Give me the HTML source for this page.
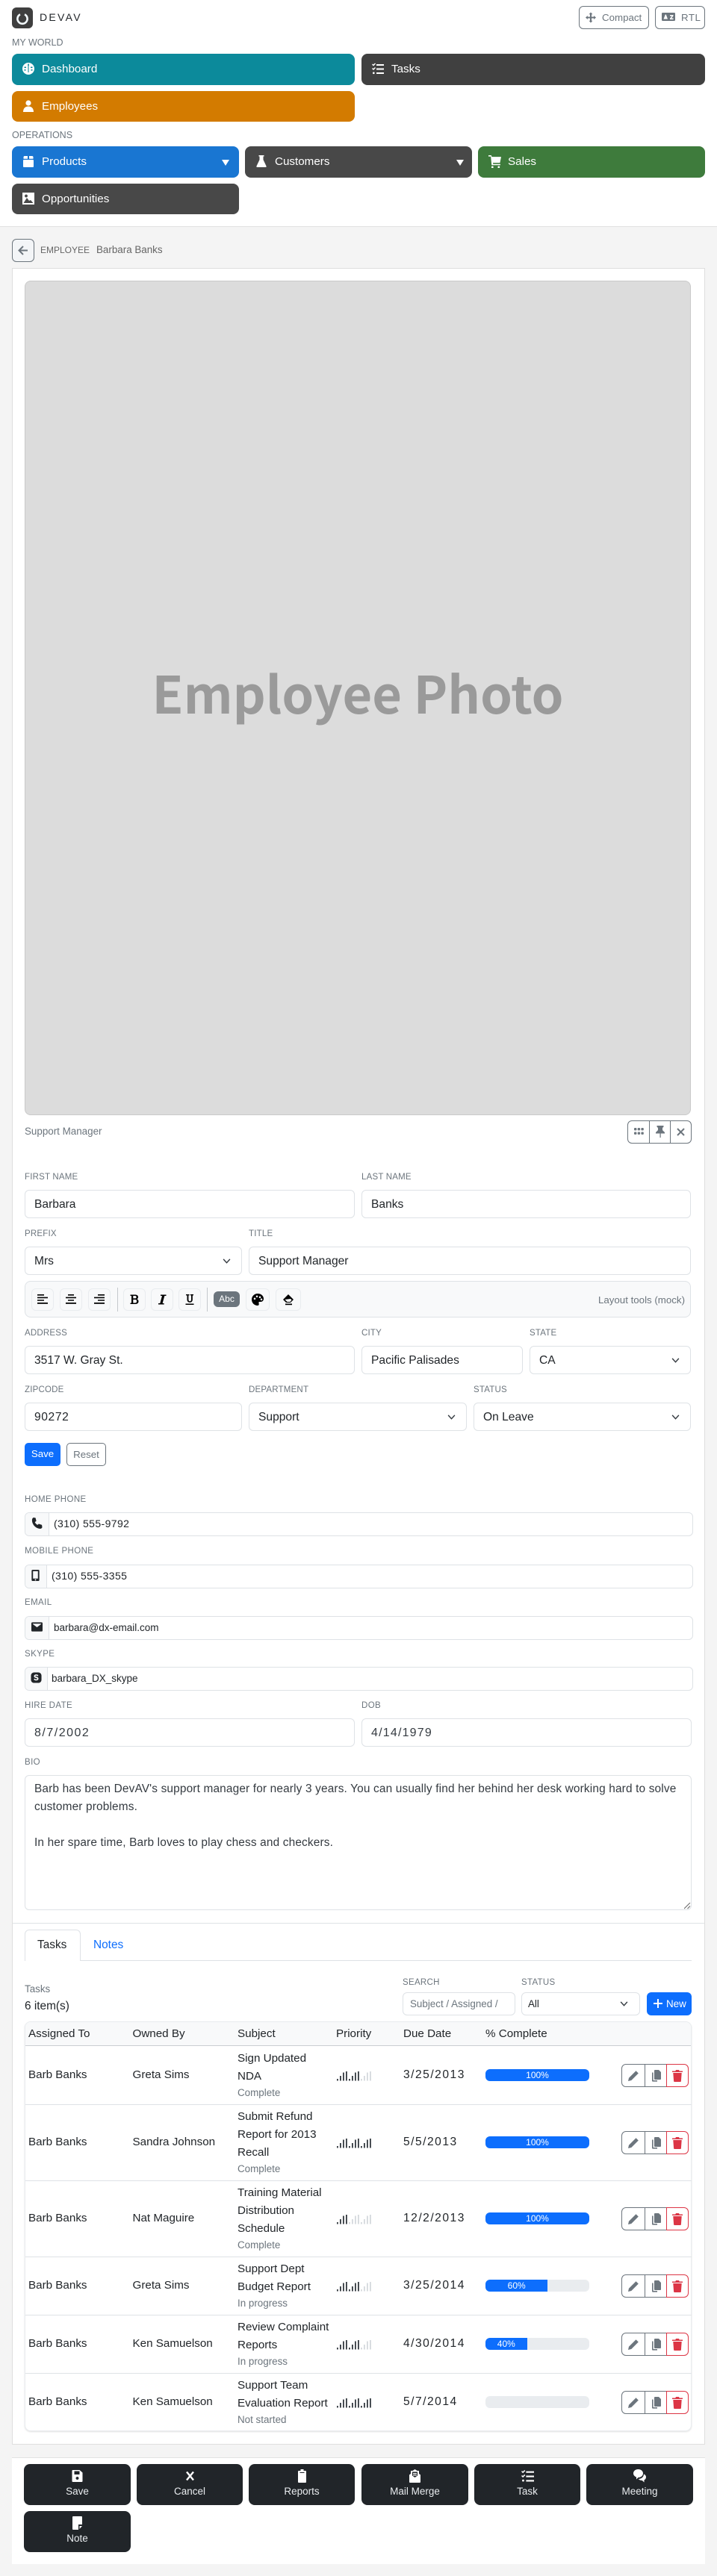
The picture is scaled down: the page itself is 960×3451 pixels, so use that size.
<!DOCTYPE html>
<html><head><meta charset="utf-8"><title>DevAV Employee</title>
<style>
html,body{margin:0;padding:0;background:#fff}
body{position:relative;width:960px;height:3451px;overflow:hidden;font-family:"Liberation Sans",sans-serif;color:#212529;font-size:15.2px}
.a,.t,.b,.l,.i{position:absolute;box-sizing:border-box}
.t{white-space:nowrap;line-height:22px;height:22px}
.l{white-space:nowrap;line-height:14px;height:14px;font-size:11.5px;color:#6c757d;letter-spacing:.2px}
.i{background:#fff;border:1px solid #dee2e6;border-radius:6px;height:38px;line-height:37px;padding-left:12px;font-size:15.6px;white-space:nowrap}
.nav{position:absolute;box-sizing:border-box;border-radius:8px;color:#fff;font-size:15.2px;line-height:42px;padding-left:40px;height:42px}
.nav svg{position:absolute;left:14px;top:12px;width:16px;height:16px;fill:#fff}
.chev{position:absolute;width:11px;height:7px;right:14px;top:15px;fill:none;stroke:#343a40;stroke-width:1.6}
.tb{position:absolute;top:9px;height:30px;width:30px;box-sizing:border-box;background:#f8f9fa;border:1px solid #e9ecef;border-radius:6px}
.tb svg{position:absolute;left:6px;top:6px;width:16px;height:16px;fill:#000}
.g{position:absolute;background:#fff;border:1px solid #dee2e6;border-radius:6px;height:30px;width:893px;left:33px;line-height:29px;font-size:13.5px;white-space:nowrap}
.g b{position:absolute;left:0;top:0;bottom:0;background:#f8f9fa;border-right:1px solid #dee2e6;border-radius:5px 0 0 5px;font-weight:400}
.g b svg{position:absolute;left:8px;top:6px;width:15px;height:15px;fill:#212529}
.g span{position:absolute}
.hr{position:absolute;left:34px;width:892px;height:1px;background:#dee2e6}
.prog{position:absolute;left:650px;width:139px;height:16px;background:#e9ecef;border-radius:6px;overflow:hidden;color:#fff;font-size:12px;line-height:16px;text-align:center}
.prog i{display:block;height:16px;background:#0d6efd;font-style:normal}
.acts{position:absolute;left:832px;width:90px;height:31px}
.acts div{position:absolute;top:0;height:31px;box-sizing:border-box;border:1px solid #6c757d}
.acts svg{position:absolute;width:16px;height:16px;top:7px;fill:#6c757d}
.sig{position:absolute;left:450px;width:48px;height:14px}
.bb{position:absolute;box-sizing:border-box;width:143px;height:55px;background:#212529;border-radius:8px;color:#e9ecef;font-size:13.5px;text-align:center}
.bb svg{position:absolute;left:63px;top:7px;width:17px;height:18px;fill:#fff}
.bb span{position:absolute;left:0;right:0;top:27px;line-height:20px}
.gr{color:#6c757d;font-size:13.4px}
</style></head>
<body>
<svg width="0" height="0" style="position:absolute">
<symbol id="pen" viewBox="0 0 16 16"><path d="M11.5 1.2l3.3 3.3L5.3 14 1 15l1-4.3z"/></symbol>
<symbol id="copy" viewBox="0 0 16 16"><path d="M7 0h5l3 3v9a1 1 0 0 1-1 1H7a1 1 0 0 1-1-1V1a1 1 0 0 1 1-1z"/><path d="M3 3.5h1.6V14H10v1.6H4a1 1 0 0 1-1-1z"/></symbol>
<symbol id="trash" viewBox="0 0 16 16"><path d="M6 0h4l.7 1.5H15V3H1V1.5h4.300zM2.300 4h11.400l-.8 11a1 1 0 0 1-1 1H4.100a1 1 0 0 1-1-1z"/></symbol>
<symbol id="sg" viewBox="0 0 16 14"><rect x="0" y="11" width="1.800" height="2.500"/><rect x="4" y="7" width="1.800" height="6.500"/><rect x="8" y="2.500" width="1.800" height="11"/><rect x="12" y="1" width="1.800" height="12.500"/></symbol>
<symbol id="tasks" viewBox="0 0 16 16"><path d="M6 2h10v2H6zM6 7.500h10v2H6zM6 13h10v2H6zM0 2.500l1-1 1 1L4 .5l1 1-3 3zM0 8l1-1 1 1 2-2 1 1-3 3z"/><rect x="1" y="12.500" width="2.600" height="2.600" rx="1"/></symbol>
</svg>

<!-- header -->
<div class="a" style="left:16px;top:10px;width:28px;height:28px;background:#3f3f3f;border-radius:6px"></div>
<svg class="a" style="left:16px;top:10px" width="28" height="28"><path d="M11 9.300A6.600 6.600 0 1 0 17 9.300" fill="none" stroke="#f2f8fb" stroke-width="2.600"/></svg>
<div class="t" style="left:53px;top:12px;font-size:14px;letter-spacing:2.300px;color:#212529">DEVAV</div>
<div class="a" style="left:775px;top:8px;width:94px;height:31px;border:1px solid #6c757d;border-radius:6px"></div>
<svg class="a" style="left:784px;top:16px;fill:#6c757d" width="14" height="15" viewBox="0 0 14 14"><path d="M7 0l2.500 2.800H8V6h3.200V4.500L14 7l-2.800 2.500V8H8v3.200h1.500L7 14l-2.500-2.800H6V8H2.800v1.500L0 7l2.800-2.500V6H6V2.800H4.500z"/></svg>
<div class="t" style="left:806px;top:13px;font-size:13.3px;color:#6c757d">Compact</div>
<div class="a" style="left:877px;top:8px;width:67px;height:31px;border:1px solid #6c757d;border-radius:6px"></div>
<svg class="a" style="left:886px;top:17px" width="18" height="12" viewBox="0 0 18 12"><rect width="18" height="11" rx="1.200" fill="#6c757d"/><path d="M2.500 8.500L4.800 2.500h1L8 8.500z" fill="#fff"/><path d="M11 3h4.500v1.200L13 7.500h2.500V9H11V7.800l2.500-3.300H11z" fill="#fff"/></svg>
<div class="t" style="left:912px;top:13px;font-size:13.300px;color:#6c757d;letter-spacing:.5px">RTL</div>

<div class="t" style="left:16px;top:46px;font-size:12.500px;color:#6c757d">MY WORLD</div>
<div class="nav" style="left:16px;top:72px;width:459px;background:#0c8a9b">Dashboard
<svg viewBox="0 0 16 16" style="left:14px"><circle cx="8" cy="8" r="8"/><g fill="#0c8a9b"><rect x="7.200" y="1.500" width="1.600" height="2.500"/><rect x="2.500" y="5.500" width="2.500" height="1.600"/><rect x="11" y="5.500" width="2.500" height="1.600"/><rect x="2.500" y="9" width="2" height="1.600"/><rect x="11.500" y="9" width="2" height="1.600"/></g><rect x="7" y="4" width="2" height="9" fill="#0c8a9b" opacity=".55"/></svg></div>
<div class="nav" style="left:484px;top:72px;width:460px;background:#404040">Tasks<svg viewBox="0 0 16 16"><use href="#tasks"/></svg></div>
<div class="nav" style="left:16px;top:122px;width:459px;height:41px;background:#d37b00">Employees
<svg viewBox="0 0 16 16"><circle cx="8" cy="4" r="3.600"/><path d="M1 16c0-5 3-7.500 7-7.500s7 2.500 7 7.500z"/></svg></div>

<div class="t" style="left:16px;top:170px;font-size:12.500px;color:#6c757d">OPERATIONS</div>
<div class="nav" style="left:16px;top:196px;width:304px;background:#1976d2">Products
<svg viewBox="0 0 16 16"><rect x="1" y="6" width="14" height="10" rx="1"/><path d="M2.500 1h4.500v3.800H1.500V2zM9 1h4.500l1 1v2.800H9z"/></svg>
<svg viewBox="0 0 10 8" style="left:281px;top:18px;width:10px;height:8px"><path d="M0 0h10L5 8z"/></svg></div>
<div class="nav" style="left:328px;top:196px;width:304px;background:#484848">Customers
<svg viewBox="0 0 16 16"><path d="M4.500 0h7v1.500h-1V6l4 8.500a1 1 0 0 1-1 1.500H2.500a1 1 0 0 1-1-1.500l4-8.500V1.500h-1z"/></svg>
<svg viewBox="0 0 10 8" style="left:283px;top:18px;width:10px;height:8px"><path d="M0 0h10L5 8z"/></svg></div>
<div class="nav" style="left:640px;top:196px;width:304px;background:#3e7b3c">Sales
<svg viewBox="0 0 16 16" style="left:13px;width:19px;height:17px"><path d="M0 0h3.500l.7 2H16l-1.500 7.500H5.500L6 11h9v1.500H4L3 1.500H0z"/><circle cx="5" cy="15" r="1.300"/><circle cx="13" cy="15" r="1.300"/></svg></div>
<div class="nav" style="left:16px;top:246px;width:304px;height:41px;background:#484848">Opportunities
<svg viewBox="0 0 16 16"><path fill-rule="evenodd" d="M0 0h16v16H0zM1.500 14L6 7l3 4 2-1 3.500 4zM5 2.500a2 2 0 1 0 .01 0z"/></svg></div>

<!-- main bg -->
<div class="a" style="left:0;top:303px;width:960px;height:3148px;background:#f4f4f4;border-top:1px solid #e2e2e2"></div>
<div class="a" style="left:16px;top:320px;width:29.500px;height:31px;border:1px solid #6c757d;border-radius:6px;background:#f3f5f7"></div>
<svg class="a" style="left:24px;top:329px" width="14" height="13" viewBox="0 0 14 13" fill="none" stroke="#6c757d" stroke-width="2"><path d="M13 6.500H2M7 1L1.500 6.500 7 12"/></svg>
<div class="t" style="left:54px;top:324px;font-size:12px;color:#666">EMPLOYEE</div>
<div class="t" style="left:129px;top:324px;font-size:13.400px;color:#666">Barbara Banks</div>

<!-- card -->
<div class="a" style="left:16px;top:359px;width:928px;height:2916px;background:#fff;border:1px solid #dedede"></div>
<div class="a" style="left:33px;top:376px;width:892px;height:1118px;background:#dcdcdc;border:1px solid #c9c9c9;border-radius:8px"></div>
<div class="t" style="left:33px;top:885px;width:892px;height:84px;line-height:84px;text-align:center;font-family:'Noto Sans CJK SC','Liberation Sans',sans-serif;font-weight:700;font-size:68.500px;color:#9a9a9a">Employee Photo</div>

<div class="t" style="left:33px;top:1505px;font-size:13.400px;color:#6c757d">Support Manager</div>
<div class="a" style="left:840px;top:1501px;width:86px;height:31px;border:1px solid #6c757d;border-radius:6px"></div>
<div class="a" style="left:869px;top:1501px;width:1px;height:31px;background:#6c757d"></div>
<div class="a" style="left:897px;top:1501px;width:1px;height:31px;background:#6c757d"></div>
<svg class="a" style="left:849px;top:1511px;fill:#6c757d" width="13" height="10" viewBox="0 0 13 10"><rect width="3.400" height="3.400" rx="1"/><rect x="4.700" width="3.400" height="3.400" rx="1"/><rect x="9.400" width="3.400" height="3.400" rx="1"/><rect y="5.500" width="3.400" height="3.400" rx="1"/><rect x="4.700" y="5.500" width="3.400" height="3.400" rx="1"/><rect x="9.400" y="5.500" width="3.400" height="3.400" rx="1"/></svg>
<svg class="a" style="left:878px;top:1508px;fill:#6c757d" width="12" height="16" viewBox="0 0 12 16"><path d="M1.500 0h9v1.500L9 3v3l3 3v1.500H6.700V16H5.500v-5.500H0V9l3-3V3L1.500 1.500z"/></svg>
<svg class="a" style="left:906px;top:1511px" width="11" height="11" fill="none" stroke="#6c757d" stroke-width="2"><path d="M1 1l9 9M10 1l-9 9"/></svg>

<div class="l" style="left:33px;top:1570px">FIRST NAME</div><div class="l" style="left:484px;top:1570px">LAST NAME</div>
<div class="i" style="left:33px;top:1594px;width:442px">Barbara</div>
<div class="i" style="left:484px;top:1594px;width:441px">Banks</div>
<div class="l" style="left:33px;top:1646px">PREFIX</div><div class="l" style="left:333px;top:1646px">TITLE</div>
<div class="i" style="left:33px;top:1670px;width:291px">Mrs<svg class="chev" viewBox="0 0 12 8"><path d="M1 1l5 5.500L11 1"/></svg></div>
<div class="i" style="left:333px;top:1670px;width:592px">Support Manager</div>

<div class="a" style="left:33px;top:1716px;width:892px;height:49px;background:#f8f9fa;border:1px solid #dee2e6;border-radius:8px">
<div class="tb" style="left:8px"><svg viewBox="0 0 16 16"><path d="M1 1h9v1.600H1zM1 4.600h14v1.600H1zM1 8.200h9v1.600H1zM1 12h14v1.800H1z"/></svg></div>
<div class="tb" style="left:46px"><svg viewBox="0 0 16 16"><path d="M4 1h8v1.600H4zM1 4.600h14v1.600H1zM4 8.200h8v1.600H4zM1 12h14v1.800H1z"/></svg></div>
<div class="tb" style="left:84px"><svg viewBox="0 0 16 16"><path d="M6 1h9v1.600H6zM1 4.600h14v1.600H1zM6 8.200h9v1.600H6zM1 12h14v1.800H1z"/></svg></div>
<div class="a" style="left:122.500px;top:8px;width:1px;height:32px;background:#c4c8cc"></div>
<div class="tb" style="left:131px"><svg viewBox="0 0 16 16"><path fill-rule="evenodd" d="M2.500 1.500h6.500c2.500 0 4 1.200 4 3.200 0 1.300-.7 2.200-1.800 2.700 1.500.4 2.300 1.500 2.300 3 0 2.300-1.700 3.600-4.300 3.600H2.500v-1.500h1.500V3H2.500zM6.300 3v3.400H9c1 0 1.600-.7 1.600-1.700S10 3 9 3zM6.300 8v4.500H9.200c1.200 0 1.900-.8 1.900-2.200S10.400 8 9.200 8z"/></svg></div>
<div class="tb" style="left:168px"><svg viewBox="0 0 16 16"><path d="M6 1.500h7.500V3h-2.200L8.600 13h2v1.500H3V13h2.300L8 3H6z"/></svg></div>
<div class="tb" style="left:205px"><svg viewBox="0 0 16 16"><path d="M3 1h4.500v1.400H6.400V8c0 1.500.7 2.300 1.800 2.300S10 9.500 10 8V2.400H8.800V1H13v1.400h-1.200V8c0 2.500-1.400 3.800-3.600 3.800S4.500 10.500 4.500 8V2.400H3zM2.500 13.500h11V15h-11z"/></svg></div>
<div class="a" style="left:243px;top:8px;width:1px;height:32px;background:#c4c8cc"></div>
<div class="a" style="left:252px;top:13px;width:35px;height:21px;background:#6c757d;border-radius:6px;color:#fff;font-size:12px;text-align:center;line-height:20px">Abc</div>
<div class="tb" style="left:295px;width:32px"><svg viewBox="0 0 16 16" style="left:7px"><path fill-rule="evenodd" d="M8 0c4.500 0 8 3 8 7 0 2.500-2 4-4 4h-1.500c-1 0-1.500 1-1 2 .5 1 .2 3-1.500 3C3.500 16 0 12.500 0 8s3.500-8 8-8zM4 5.500a1.300 1.300 0 1 0 .01 0zM7 2.500a1.300 1.300 0 1 0 .01 0zM11 3.500a1.300 1.300 0 1 0 .01 0zM13 6.500a1.300 1.300 0 1 0 .01 0z"/></svg></div>
<div class="tb" style="left:335px;width:34px"><svg viewBox="0 0 16 16" style="left:8px"><path fill-rule="evenodd" d="M8 1l7 7-4 4H5L1 8zM3.500 8l3 3h4l2-2.500L11 7z"/><rect x="4" y="13.500" width="9" height="1.700"/></svg></div>
<div class="t" style="right:7px;top:14px;font-size:13.300px;color:#6c757d">Layout tools (mock)</div>
</div>

<div class="l" style="left:33px;top:1779px">ADDRESS</div><div class="l" style="left:484px;top:1779px">CITY</div><div class="l" style="left:709px;top:1779px">STATE</div>
<div class="i" style="left:33px;top:1803px;width:442px">3517 W. Gray St.</div>
<div class="i" style="left:484px;top:1803px;width:216px">Pacific Palisades</div>
<div class="i" style="left:709px;top:1803px;width:216px">CA<svg class="chev" viewBox="0 0 12 8"><path d="M1 1l5 5.500L11 1"/></svg></div>
<div class="l" style="left:33px;top:1855px">ZIPCODE</div><div class="l" style="left:333px;top:1855px">DEPARTMENT</div><div class="l" style="left:634px;top:1855px">STATUS</div>
<div class="i" style="left:33px;top:1879px;width:291px;letter-spacing:.6px">90272</div>
<div class="i" style="left:333px;top:1879px;width:292px">Support<svg class="chev" viewBox="0 0 12 8"><path d="M1 1l5 5.500L11 1"/></svg></div>
<div class="i" style="left:634px;top:1879px;width:291px">On Leave<svg class="chev" viewBox="0 0 12 8"><path d="M1 1l5 5.500L11 1"/></svg></div>
<div class="a" style="left:33px;top:1933px;width:48px;height:31px;background:#0d6efd;border-radius:5px;color:#fff;font-size:13.300px;line-height:30px;text-align:center">Save</div>
<div class="a" style="left:89px;top:1933px;width:53px;height:31px;border:1px solid #6c757d;border-radius:5px;color:#6c757d;font-size:13.300px;line-height:29px;text-align:center">Reset</div>

<div class="l" style="left:33px;top:2002px;letter-spacing:.4px">HOME PHONE</div>
<div class="g" style="top:2026px"><b style="width:31px"><svg viewBox="0 0 16 16"><path d="M3 0l3 .5L7 5 5 6.500c.7 1.800 2 3 3.800 4L10.500 9l4.500 1.500.5 3.500c-.5 1.300-1.500 2-3 2C6 15.500.5 9.500 1 3 1.200 1.500 2 .5 3 0z"/></svg></b><span style="left:38px;font-size:14px;letter-spacing:.4px">(310) 555-9792</span></div>
<div class="l" style="left:33px;top:2071px;letter-spacing:.4px">MOBILE PHONE</div>
<div class="g" style="top:2095.500px"><b style="width:28px"><svg viewBox="0 0 16 16" style="left:6px"><path fill-rule="evenodd" d="M4 0h8a1.500 1.500 0 0 1 1.500 1.500v13A1.500 1.500 0 0 1 12 16H4a1.500 1.500 0 0 1-1.500-1.500v-13A1.500 1.500 0 0 1 4 0zM4.500 2v10.500h7V2zM8 13.300a1 1 0 1 0 .01 0z"/></svg></b><span style="left:35px;font-size:14px;letter-spacing:.4px">(310) 555-3355</span></div>
<div class="l" style="left:33px;top:2140px;letter-spacing:.4px">EMAIL</div>
<div class="g" style="top:2164.500px"><b style="width:31px"><svg viewBox="0 0 16 16"><path fill-rule="evenodd" d="M1.500 1.500h13A1.500 1.500 0 0 1 16 3v10a1.500 1.500 0 0 1-1.500 1.500h-13A1.500 1.500 0 0 1 0 13V3a1.500 1.500 0 0 1 1.500-1.500zM2 4l6 4.500L14 4v-.5H2z"/></svg></b><span style="left:38px">barbara@dx-email.com</span></div>
<div class="l" style="left:33px;top:2209px;letter-spacing:.4px">SKYPE</div>
<div class="g" style="top:2233px"><b style="width:29px"><svg viewBox="0 0 16 16" style="left:7px"><path fill-rule="evenodd" d="M5 0.500h6c2.500 0 4.500 2 4.500 4.500v6c0 2.500-2 4.500-4.500 4.500H5C2.500 15.500.5 13.500.5 11V5C.5 2.500 2.500.5 5 .5zM11 5.500C11 4 9.500 3.500 8 3.500 6 3.500 4.800 4.500 4.800 6c0 3 4.500 2 4.500 3.500 0 .7-.7 1-1.400 1-1 0-1.500-.5-1.900-1.200l-1.500.9c.6 1.200 1.800 1.800 3.400 1.800 2 0 3.300-1 3.300-2.600 0-3.200-4.500-2.200-4.500-3.500 0-.6.600-.9 1.300-.9.800 0 1.200.3 1.500.9z"/></svg></b><span style="left:35px">barbara_DX_skype</span></div>
<div class="l" style="left:33px;top:2278px;letter-spacing:.4px">HIRE DATE</div><div class="l" style="left:484px;top:2278px;letter-spacing:.4px">DOB</div>
<div class="i" style="left:33px;top:2302px;width:442px;font-size:16px;letter-spacing:1.500px;color:#343a40">8/7/2002</div>
<div class="i" style="left:484px;top:2302px;width:442px;font-size:16px;letter-spacing:1.200px;color:#343a40">4/14/1979</div>
<div class="l" style="left:33px;top:2354px;letter-spacing:.4px">BIO</div>
<div class="a" style="left:33px;top:2378px;width:893px;height:181px;border:1px solid #dee2e6;border-radius:6px;font-size:15.400px;letter-spacing:.16px;line-height:24px;padding:6px 12px;color:#343a40;white-space:nowrap">Barb has been DevAV's support manager for nearly 3 years. You can usually find her behind her desk working hard to solve<br>customer problems.<br><br>In her spare time, Barb loves to play chess and checkers.</div>
<svg class="a" style="left:916px;top:2549px" width="9" height="9" stroke="#666" fill="none"><path d="M0 8L8 0M4.500 8L8 4.500"/></svg>

<div class="a" style="left:17px;top:2576px;width:926px;height:1px;background:#dee2e6"></div>

<!-- tabs -->
<div class="a" style="left:107px;top:2626px;width:819px;height:1px;background:#dee2e6"></div>
<div class="a" style="left:33px;top:2585px;width:75px;height:42px;border:1px solid #dee2e6;border-bottom:0;border-radius:6px 6px 0 0;background:#fff"></div>
<div class="t" style="left:50px;top:2595px;font-size:15.400px">Tasks</div>
<div class="t" style="left:125px;top:2595px;font-size:15.400px;color:#0d6efd">Notes</div>

<div class="t gr" style="left:33px;top:2654px">Tasks</div>
<div class="t" style="left:33px;top:2677px;font-size:15.400px">6 item(s)</div>
<div class="l" style="left:539px;top:2649px;letter-spacing:.3px">SEARCH</div><div class="l" style="left:698px;top:2649px;letter-spacing:.3px">STATUS</div>
<div class="i" style="left:539px;top:2669px;width:151px;height:31px;line-height:30px;padding-left:9px;font-size:13.400px;color:#6c757d">Subject / Assigned /</div>
<div class="i" style="left:698px;top:2669px;width:159px;height:31px;line-height:30px;padding-left:8px;font-size:13.400px">All<svg class="chev" style="top:11px;right:15px" viewBox="0 0 12 8"><path d="M1 1l5 5.500L11 1"/></svg></div>
<div class="a" style="left:866px;top:2669px;width:60px;height:31px;background:#0d6efd;border-radius:6px;color:#fff;font-size:13.400px;line-height:31px;padding-left:26px">New</div>
<svg class="a" style="left:875px;top:2678px" width="12" height="12" stroke="#fff" stroke-width="2"><path d="M6 0v12M0 6h12"/></svg>

<!-- table -->
<div class="a" style="left:33px;top:2708px;width:893px;height:549px;background:#fff;border:1px solid #e9ecef;border-radius:8px;box-shadow:0 1px 2px rgba(0,0,0,.12)"></div>
<div class="a" style="left:34px;top:2709px;width:891px;height:32px;background:#f8f9fa;border-bottom:1px solid #c9cdd1;border-radius:7px 7px 0 0"></div>
<div class="t" style="left:38px;top:2714px">Assigned To</div><div class="t" style="left:177.500px;top:2714px">Owned By</div><div class="t" style="left:318px;top:2714px">Subject</div><div class="t" style="left:450px;top:2714px">Priority</div><div class="t" style="left:540px;top:2714px">Due Date</div><div class="t" style="left:650px;top:2714px">% Complete</div>
<div class="hr" style="top:2819px"></div><div class="hr" style="top:2921px"></div><div class="hr" style="top:3023px"></div><div class="hr" style="top:3101px"></div><div class="hr" style="top:3179px"></div>

<!-- row 1 -->
<div class="t" style="left:38px;top:2769px">Barb Banks</div><div class="t" style="left:177.500px;top:2769px">Greta Sims</div>
<div class="t" style="left:318px;top:2747px">Sign Updated</div><div class="t" style="left:318px;top:2771px">NDA</div><div class="t gr" style="left:318px;top:2793px">Complete</div>
<svg class="sig" style="top:2774px" fill="#343a40"><use href="#sg" width="16" height="14" x="1"/><use href="#sg" width="16" height="14" x="17"/><use href="#sg" width="16" height="14" x="33" fill="#d5d9dd"/></svg>
<div class="t" style="left:540px;top:2769px;font-size:15.600px;letter-spacing:1.500px">3/25/2013</div>
<div class="prog" style="top:2772px"><i style="width:100%">100%</i></div>
<div class="acts" style="top:2765px"><div style="left:0;width:32px;border-radius:6px 0 0 6px"><svg style="left:7px"><use href="#pen" width="16" height="16"/></svg></div><div style="left:31px;width:30px;border-left:1px solid #6c757d"><svg style="left:6px"><use href="#copy" width="16" height="16"/></svg></div><div style="left:60px;width:30px;border-color:#dc3545;border-radius:0 6px 6px 0"><svg style="left:6px;fill:#dc3545"><use href="#trash" width="16" height="16"/></svg></div></div>

<!-- row 2 -->
<div class="t" style="left:38px;top:2859px">Barb Banks</div><div class="t" style="left:177.500px;top:2859px">Sandra Johnson</div>
<div class="t" style="left:318px;top:2825px">Submit Refund</div><div class="t" style="left:318px;top:2849px">Report for 2013</div><div class="t" style="left:318px;top:2873px">Recall</div><div class="t gr" style="left:318px;top:2895px">Complete</div>
<svg class="sig" style="top:2864px" fill="#343a40"><use href="#sg" width="16" height="14" x="1"/><use href="#sg" width="16" height="14" x="17"/><use href="#sg" width="16" height="14" x="33"/></svg>
<div class="t" style="left:540px;top:2859px;font-size:15.600px;letter-spacing:1.500px">5/5/2013</div>
<div class="prog" style="top:2862px"><i style="width:100%">100%</i></div>
<div class="acts" style="top:2855px"><div style="left:0;width:32px;border-radius:6px 0 0 6px"><svg style="left:7px"><use href="#pen" width="16" height="16"/></svg></div><div style="left:31px;width:30px"><svg style="left:6px"><use href="#copy" width="16" height="16"/></svg></div><div style="left:60px;width:30px;border-color:#dc3545;border-radius:0 6px 6px 0"><svg style="left:6px;fill:#dc3545"><use href="#trash" width="16" height="16"/></svg></div></div>

<!-- row 3 -->
<div class="t" style="left:38px;top:2961px">Barb Banks</div><div class="t" style="left:177.500px;top:2961px">Nat Maguire</div>
<div class="t" style="left:318px;top:2927px">Training Material</div><div class="t" style="left:318px;top:2951px">Distribution</div><div class="t" style="left:318px;top:2975px">Schedule</div><div class="t gr" style="left:318px;top:2997px">Complete</div>
<svg class="sig" style="top:2966px" fill="#d5d9dd"><use href="#sg" width="16" height="14" x="1" fill="#343a40"/><use href="#sg" width="16" height="14" x="17"/><use href="#sg" width="16" height="14" x="33"/></svg>
<div class="t" style="left:540px;top:2961px;font-size:15.600px;letter-spacing:1.500px">12/2/2013</div>
<div class="prog" style="top:2964px"><i style="width:100%">100%</i></div>
<div class="acts" style="top:2957px"><div style="left:0;width:32px;border-radius:6px 0 0 6px"><svg style="left:7px"><use href="#pen" width="16" height="16"/></svg></div><div style="left:31px;width:30px"><svg style="left:6px"><use href="#copy" width="16" height="16"/></svg></div><div style="left:60px;width:30px;border-color:#dc3545;border-radius:0 6px 6px 0"><svg style="left:6px;fill:#dc3545"><use href="#trash" width="16" height="16"/></svg></div></div>

<!-- row 4 -->
<div class="t" style="left:38px;top:3051px">Barb Banks</div><div class="t" style="left:177.500px;top:3051px">Greta Sims</div>
<div class="t" style="left:318px;top:3029px">Support Dept</div><div class="t" style="left:318px;top:3053px">Budget Report</div><div class="t gr" style="left:318px;top:3075px">In progress</div>
<svg class="sig" style="top:3056px" fill="#343a40"><use href="#sg" width="16" height="14" x="1"/><use href="#sg" width="16" height="14" x="17"/><use href="#sg" width="16" height="14" x="33" fill="#d5d9dd"/></svg>
<div class="t" style="left:540px;top:3051px;font-size:15.600px;letter-spacing:1.500px">3/25/2014</div>
<div class="prog" style="top:3054px"><i style="width:60%">60%</i></div>
<div class="acts" style="top:3047px"><div style="left:0;width:32px;border-radius:6px 0 0 6px"><svg style="left:7px"><use href="#pen" width="16" height="16"/></svg></div><div style="left:31px;width:30px"><svg style="left:6px"><use href="#copy" width="16" height="16"/></svg></div><div style="left:60px;width:30px;border-color:#dc3545;border-radius:0 6px 6px 0"><svg style="left:6px;fill:#dc3545"><use href="#trash" width="16" height="16"/></svg></div></div>

<!-- row 5 -->
<div class="t" style="left:38px;top:3129px">Barb Banks</div><div class="t" style="left:177.500px;top:3129px">Ken Samuelson</div>
<div class="t" style="left:318px;top:3107px">Review Complaint</div><div class="t" style="left:318px;top:3131px">Reports</div><div class="t gr" style="left:318px;top:3153px">In progress</div>
<svg class="sig" style="top:3134px" fill="#343a40"><use href="#sg" width="16" height="14" x="1"/><use href="#sg" width="16" height="14" x="17"/><use href="#sg" width="16" height="14" x="33" fill="#d5d9dd"/></svg>
<div class="t" style="left:540px;top:3129px;font-size:15.600px;letter-spacing:1.500px">4/30/2014</div>
<div class="prog" style="top:3132px"><i style="width:40%">40%</i></div>
<div class="acts" style="top:3125px"><div style="left:0;width:32px;border-radius:6px 0 0 6px"><svg style="left:7px"><use href="#pen" width="16" height="16"/></svg></div><div style="left:31px;width:30px"><svg style="left:6px"><use href="#copy" width="16" height="16"/></svg></div><div style="left:60px;width:30px;border-color:#dc3545;border-radius:0 6px 6px 0"><svg style="left:6px;fill:#dc3545"><use href="#trash" width="16" height="16"/></svg></div></div>

<!-- row 6 -->
<div class="t" style="left:38px;top:3207px">Barb Banks</div><div class="t" style="left:177.500px;top:3207px">Ken Samuelson</div>
<div class="t" style="left:318px;top:3185px">Support Team</div><div class="t" style="left:318px;top:3209px">Evaluation Report</div><div class="t gr" style="left:318px;top:3231px">Not started</div>
<svg class="sig" style="top:3212px" fill="#343a40"><use href="#sg" width="16" height="14" x="1"/><use href="#sg" width="16" height="14" x="17"/><use href="#sg" width="16" height="14" x="33"/></svg>
<div class="t" style="left:540px;top:3207px;font-size:15.600px;letter-spacing:1.500px">5/7/2014</div>
<div class="prog" style="top:3210px"></div>
<div class="acts" style="top:3203px"><div style="left:0;width:32px;border-radius:6px 0 0 6px"><svg style="left:7px"><use href="#pen" width="16" height="16"/></svg></div><div style="left:31px;width:30px"><svg style="left:6px"><use href="#copy" width="16" height="16"/></svg></div><div style="left:60px;width:30px;border-color:#dc3545;border-radius:0 6px 6px 0"><svg style="left:6px;fill:#dc3545"><use href="#trash" width="16" height="16"/></svg></div></div>

<!-- bottom bar -->
<div class="a" style="left:16px;top:3292px;width:928px;height:143px;background:#fff;border-top:1px solid #e2e2e2"></div>
<div class="bb" style="left:32px;top:3301px"><svg viewBox="0 0 16 18"><path fill-rule="evenodd" d="M2 1h9l4 3.500V16a1 1 0 0 1-1 1H2a1 1 0 0 1-1-1V2a1 1 0 0 1 1-1zM4 2.500v4.500h7V2.500zM8 10a2 2 0 1 0 .01 0z"/></svg><span>Save</span></div>
<div class="bb" style="left:183px;top:3301px;width:142px"><svg viewBox="0 0 16 18" fill="none" stroke="#fff" stroke-width="2.400"><path fill="none" d="M3.500 3.500l9 11M12.500 3.500l-9 11"/></svg><span>Cancel</span></div>
<div class="bb" style="left:333px;top:3301px;width:142px"><svg viewBox="0 0 16 18"><path fill-rule="evenodd" d="M6 0h4v2h2.500a1 1 0 0 1 1 1v14a1 1 0 0 1-1 1h-9a1 1 0 0 1-1-1V3a1 1 0 0 1 1-1H6zM5 5h6V4H5z"/></svg><span>Reports</span></div>
<div class="bb" style="left:484px;top:3301px"><svg viewBox="0 0 16 18"><path fill-rule="evenodd" d="M8 0l3 2h2.500v4l2 1.500V17a1 1 0 0 1-1 1h-13a1 1 0 0 1-1-1V7.500l2-1.500V2H5zM4.500 3.500v5L8 11l3.500-2.500v-5zM5.500 5h5v1.200h-5zM5.500 7.300h5v1.200h-5z"/></svg><span>Mail Merge</span></div>
<div class="bb" style="left:635px;top:3301px;width:142px"><svg viewBox="0 0 16 16"><use href="#tasks"/></svg><span>Task</span></div>
<div class="bb" style="left:785px;top:3301px"><svg viewBox="0 0 18 18" style="left:62px;width:19px"><path d="M7 0c3.500 0 6.500 2.300 6.500 5.500S10.500 11 7 11l-2.500 2.500V10.500C2 9.500 .5 7.700.5 5.500.5 2.300 3.500 0 7 0z"/><path d="M14.500 6.500c2 .8 3 2.300 3 4 0 1.700-1 3.200-2.500 4v3l-2.700-2.500c-2.300 0-4-.7-5-2 3.800 0 7-2.500 7.200-6.500z"/></svg><span>Meeting</span></div>
<div class="bb" style="left:32px;top:3364px"><svg viewBox="0 0 16 18"><path d="M2.500 0h11a1 1 0 0 1 1 1v10h-5v7h-7a1 1 0 0 1-1-1V1a1 1 0 0 1 1-1zM11 13h3.500L11 17z"/></svg><span>Note</span></div>
</body></html>
